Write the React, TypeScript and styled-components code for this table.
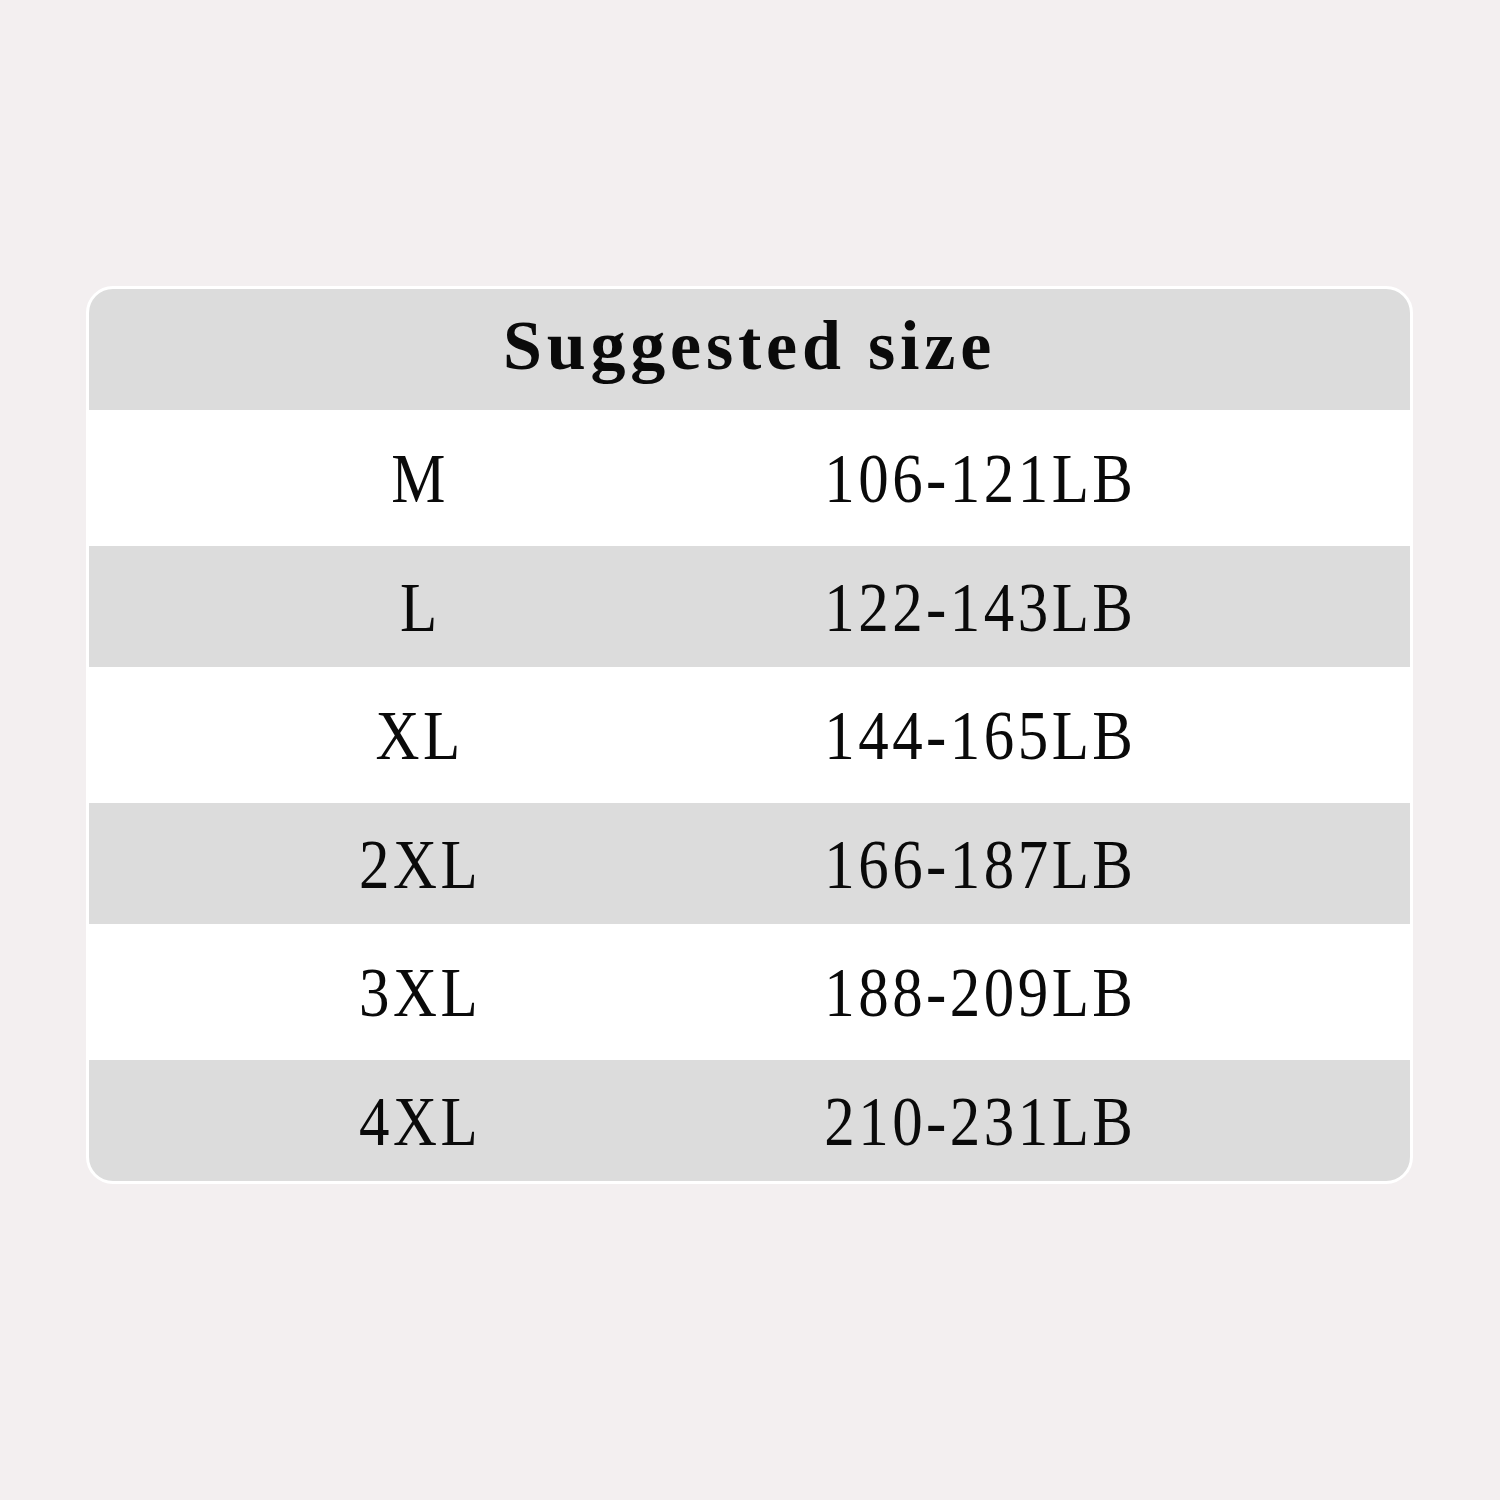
import React from "react";
import styled, { createGlobalStyle } from "styled-components";

type Row = {
  size: string;
  weight: string;
};

const ROWS: Row[] = [
  { size: "M", weight: "106-121LB" },
  { size: "L", weight: "122-143LB" },
  { size: "XL", weight: "144-165LB" },
  { size: "2XL", weight: "166-187LB" },
  { size: "3XL", weight: "188-209LB" },
  { size: "4XL", weight: "210-231LB" },
];

const GlobalStyle = createGlobalStyle`
  html, body {
    margin: 0;
    padding: 0;
    background: #f3eff0;
  }
  body {
    font-family: "Liberation Serif", "DejaVu Serif", serif;
    color: #0a0a0a;
  }
`;

const Page = styled.div`
  width: 1500px;
  height: 1500px;
  box-sizing: border-box;
  padding: 286px 87px 0 86px;
`;

const Card = styled.div`
  border: 3px solid #ffffff;
  border-radius: 27px;
  overflow: hidden;
  background: #ffffff;
`;

const Header = styled.div`
  height: 121px;
  background: #dcdcdc;
  display: flex;
  align-items: center;
  justify-content: center;
`;

const Title = styled.h1`
  margin: 0;
  font-size: 70px;
  font-weight: bold;
  letter-spacing: 4.8px;
  line-height: 1;
  padding-bottom: 8px;
`;

const TableRow = styled.div<{ $shaded: boolean }>`
  display: grid;
  grid-template-columns: 658px 1fr;
  align-items: center;
  height: ${(p) => (p.$shaded ? 121 : 136)}px;
  background: ${(p) => (p.$shaded ? "#dcdcdc" : "#ffffff")};
`;

const Cell = styled.div<{ $right?: boolean }>`
  text-align: center;
  line-height: 1;
  padding-top: 2px;
  padding-right: ${(p) => (p.$right ? 200 : 0)}px;
`;

/* condensed, slightly tracked serif like the chart artwork */
const CellText = styled.span`
  display: inline-block;
  font-size: 70px;
  letter-spacing: 4px;
  margin-right: -4px;
  transform: scaleX(0.87);
`;

const App = (): JSX.Element => {
  return (
    <Page>
      <GlobalStyle />
      <Card>
        <Header>
          <Title>Suggested size</Title>
        </Header>
        {ROWS.map((row, i) => (
          <TableRow key={row.size} $shaded={i % 2 === 1}>
            <Cell>
              <CellText>{row.size}</CellText>
            </Cell>
            <Cell $right>
              <CellText>{row.weight}</CellText>
            </Cell>
          </TableRow>
        ))}
      </Card>
    </Page>
  );
};

export default App;
